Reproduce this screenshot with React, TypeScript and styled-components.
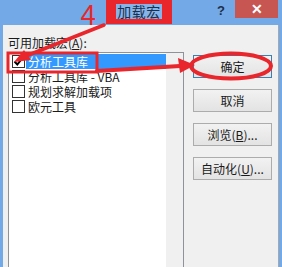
import React from "react";
import styled, { createGlobalStyle } from "styled-components";

const Global = createGlobalStyle`
  html, body { margin: 0; padding: 0; background: #f0f0f0; }
  body { width: 282px; height: 267px; overflow: hidden; }
`;

const FONT = `"Noto Sans CJK SC", "Liberation Sans", sans-serif`;

const Window = styled.div`
  position: relative;
  width: 282px;
  height: 267px;
  background: #72a9e6;
  display: flex;
  flex-direction: column;
  overflow: hidden;
  font-family: ${FONT};
`;

const TitleBar = styled.div`
  height: 25px;
  flex: none;
  display: flex;
  align-items: flex-start;
`;

const TitleBox = styled.div`
  margin-left: 106px;
  width: 66px;
  height: 24px;
  box-sizing: border-box;
  border: 5px solid #e8262c;
  border-top-width: 4px;
  background: #e8262c;
  display: flex;
  align-items: center;
  justify-content: center;
`;

const TitleText = styled.span`
  background: #84b4ea;
  color: #1d2f4a;
  font-size: 14px;
  line-height: 15px;
  padding: 0 1px;
  letter-spacing: 0.5px;
`;

const Help = styled.span`
  margin-left: auto;
  margin-top: 3px;
  font-family: "Liberation Sans", sans-serif;
  font-weight: bold;
  font-size: 13px;
  color: #1d2f4a;
`;

const Close = styled.div`
  width: 43px;
  height: 18px;
  margin-left: 10px;
  margin-right: 4px;
  background: #c75552;
  color: #fff;
  display: flex;
  align-items: center;
  justify-content: center;
  font-family: "Liberation Sans", sans-serif;
  font-weight: bold;
  font-size: 14px;
`;

const Body = styled.div`
  flex: 1;
  margin: 0 3px 0 3px;
  background: #f0f0f0;
  border-right: 1px solid #a8a8a8;
  padding: 10px 0 0 5px;
  display: flex;
  flex-direction: column;
  gap: 2px;
`;

const Label = styled.div`
  font-size: 12px;
  line-height: 15px;
  color: #1a1a1a;
  u { text-decoration: underline; }
`;

const Main = styled.div`
  flex: 1;
  display: flex;
  gap: 9px;
`;

const ListBox = styled.div`
  width: 176px;
  height: 230px;
  box-sizing: border-box;
  border: 1px solid #8f9398;
  background: #fff;
  display: flex;
`;

const Items = styled.div`
  flex: 1;
  padding-top: 1px;
  display: flex;
  flex-direction: column;
`;

const ScrollTrack = styled.div`
  width: 17px;
  background: #f0f0f0;
`;

const Row = styled.div`
  height: 15px;
  display: flex;
  align-items: center;
  padding-left: 3px;
  gap: 1px;
`;

const Box = styled.span`
  width: 11px;
  height: 11px;
  border: 1px solid #333;
  background: #fff;
  flex: none;
  display: flex;
  align-items: center;
  justify-content: center;
`;

const ItemText = styled.span<{ $sel?: boolean }>`
  flex: 1;
  height: 15px;
  line-height: 15px;
  font-size: 12px;
  padding-left: 2px;
  overflow: hidden;
  background: ${(p) => (p.$sel ? "#3399ff" : "transparent")};
  color: ${(p) => (p.$sel ? "#fff" : "#1a1a1a")};
  white-space: nowrap;
`;

const Buttons = styled.div`
  margin-top: 3px;
  width: 79px;
  display: flex;
  flex-direction: column;
  gap: 11px;
`;

const Button = styled.div<{ $def?: boolean }>`
  height: 23px;
  box-sizing: border-box;
  border: 1px solid ${(p) => (p.$def ? "#3c7fb1" : "#acacac")};
  background: linear-gradient(#f2f2f2, #e3e3e3);
  display: flex;
  align-items: center;
  justify-content: center;
  font-size: 12px;
  color: #1a1a1a;
  u { text-decoration: underline; }
`;

const Overlay = styled.svg`
  position: absolute;
  left: 0;
  top: 0;
  pointer-events: none;
`;

const Digit = styled.span`
  position: absolute;
  left: 80px;
  top: 2px;
  font-family: "Liberation Sans", sans-serif;
  font-size: 29px;
  line-height: 26px;
  color: #e8262c;
  transform: scaleX(0.95);
`;

const Check = () => (
  <svg width="11" height="11" viewBox="0 0 11 11">
    <path d="M1.5 5.5 L4.3 8.5 L9.5 1.8" fill="none" stroke="#000" strokeWidth="2" />
  </svg>
);

const items = [
  { t: "分析工具库", on: true, sel: true },
  { t: "分析工具库 - VBA", on: false, sel: false },
  { t: "规划求解加载项", on: false, sel: false },
  { t: "欧元工具", on: false, sel: false },
];

export default function App() {
  return (
    <>
      <Global />
      <Window>
        <TitleBar>
          <TitleBox>
            <TitleText>加载宏</TitleText>
          </TitleBox>
          <Help>?</Help>
          <Close>✕</Close>
        </TitleBar>
        <Body>
          <Label>
            可用加载宏(<u>A</u>):
          </Label>
          <Main>
            <ListBox>
              <Items>
                {items.map((it) => (
                  <Row key={it.t}>
                    <Box>{it.on && <Check />}</Box>
                    <ItemText $sel={it.sel}>{it.t}</ItemText>
                  </Row>
                ))}
              </Items>
              <ScrollTrack />
            </ListBox>
            <Buttons>
              <Button $def>确定</Button>
              <Button>取消</Button>
              <Button>
                浏览(<u>B</u>)...
              </Button>
              <Button>
                自动化(<u>U</u>)...
              </Button>
            </Buttons>
          </Main>
        </Body>
        <Overlay width="282" height="267" viewBox="0 0 282 267">
          <rect x="8" y="53" width="89" height="19" fill="none" stroke="#e8262c" strokeWidth="3" />
          <line x1="104" y1="25" x2="26" y2="56" stroke="#e8262c" strokeWidth="3.5" strokeLinecap="round" />
          <polygon points="14,62 24,50 31,60" fill="#e8262c" />
          <line x1="97" y1="71" x2="180" y2="66" stroke="#e8262c" strokeWidth="4" strokeLinecap="round" />
          <polygon points="195,65 178,58 180,73" fill="#e8262c" />
          <ellipse cx="231" cy="66" rx="40" ry="12.5" fill="none" stroke="#e8262c" strokeWidth="4" />
        </Overlay>
        <Digit>4</Digit>
      </Window>
    </>
  );
}
